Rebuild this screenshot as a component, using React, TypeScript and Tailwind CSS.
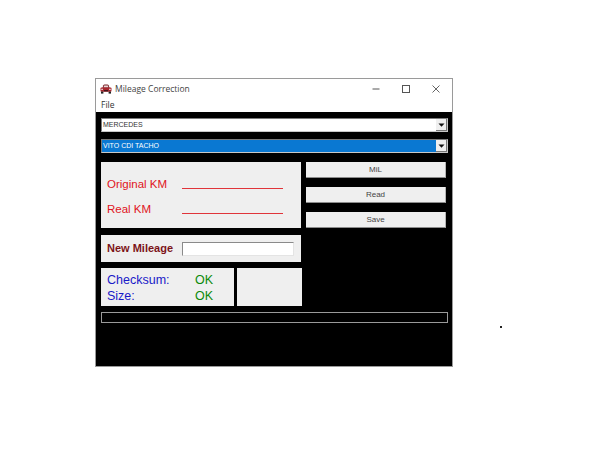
const sans = "font-['Liberation_Sans',Arial,sans-serif]";

function Combo({ text, selected }: { text: string; selected?: boolean }) {
  return (
    <div className="flex h-[14px] w-[347px] border border-t-[#7a7a7a] border-l-[#7a7a7a] border-r-[#c8c8c8] border-b-[#c8c8c8] bg-white">
      <div className={`flex flex-1 items-center pl-[1px] text-[7px] ${selected ? "bg-[#0a78d2] text-white" : "bg-white text-[#333]"}`}>{text}</div>
      <div className="flex w-[11px] items-center justify-center border-b border-r border-b-[#777] border-r-[#777] bg-[#efefef]">
        <svg width="7" height="4" viewBox="0 0 7 4"><path d="M0.5 0.5h6L3.5 3.8z" fill="#111" /></svg>
      </div>
    </div>
  );
}

function Btn({ text }: { text: string }) {
  return (
    <div className="flex h-[16px] w-[140px] items-center justify-center border-b border-r border-b-[#8c8c8c] border-r-[#b5b5b5] bg-[#efefef] pt-[1px] text-[8px] text-[#444]">{text}</div>
  );
}

export default function App() {
  return (
    <div className={`relative h-[450px] w-[600px] overflow-hidden bg-white pl-[95px] pt-[78px] ${sans}`}>
      <div className="flex h-[289px] w-[358px] flex-col border border-[#9a9a9a] bg-black">
        <div className="h-[33px] bg-white">
          <div className="flex h-[20px] items-center">
            <svg className="ml-[4px]" width="12" height="10" viewBox="0 0 12 10">
              <path d="M2.4 4 3.4 1.2C3.6.7 4 .5 4.5.5h3c.5 0 .9.2 1.1.7L9.6 4z" fill="#7a2026" />
              <path d="M3.5 3.6 4.2 1.5h3.6l.7 2.1z" fill="#e8d8d8" />
              <rect x="0.5" y="3.6" width="11" height="4.2" rx="1" fill="#a8262e" />
              <rect x="1" y="7.6" width="2.4" height="2" fill="#222" />
              <rect x="8.6" y="7.6" width="2.4" height="2" fill="#222" />
              <rect x="1.2" y="4.8" width="1.8" height="1" fill="#eee" />
              <rect x="9" y="4.8" width="1.8" height="1" fill="#eee" />
              <rect x="4" y="6" width="4" height="1.4" fill="#41141a" />
            </svg>
            <span className="ml-[3px] font-['Open_Sans',sans-serif] text-[8.5px] text-[#444]">Mileage Correction</span>
            <div className="ml-auto flex items-center">
              <svg className="mr-[22px]" width="8" height="8" viewBox="0 0 8 8"><path d="M0.5 4h7" stroke="#555" strokeWidth="1" /></svg>
              <svg className="mr-[22px]" width="8" height="8" viewBox="0 0 8 8"><rect x="0.5" y="0.5" width="7" height="7" fill="none" stroke="#555" strokeWidth="1" /></svg>
              <svg className="mr-[12px]" width="8" height="8" viewBox="0 0 8 8"><path d="M0.5 0.5l7 7M7.5 0.5l-7 7" stroke="#555" strokeWidth="0.9" /></svg>
            </div>
          </div>
          <div className="pl-[5px] pt-[1px] font-['Open_Sans',sans-serif] text-[8.5px] leading-[10px] text-[#333]">File</div>
        </div>

        <div className="flex flex-col pl-[5px] pt-[6px]">
          <Combo text="MERCEDES" />
          <div className="mt-[7px]"><Combo text="VITO CDI TACHO" selected /></div>

          <div className="mt-[9px] flex gap-[5px]">
            <div className="flex w-[200px] flex-col gap-[7px]">
              <div className="flex h-[66px] w-[200px] flex-col justify-center gap-[11px] bg-[#efefef] pl-[6px] text-[11.5px] text-[#e0141c]">
                <div className="flex h-[14px] items-center">
                  <span className="mt-[4px] w-[75px]">Original KM</span>
                  <span className="mt-[12px] h-px w-[101px] bg-[#e0343a]" />
                </div>
                <div className="flex h-[14px] items-center">
                  <span className="mt-[4px] w-[75px]">Real KM</span>
                  <span className="mt-[12px] h-px w-[101px] bg-[#e0343a]" />
                </div>
              </div>
              <div className="flex h-[27px] w-[200px] items-center bg-[#efefef] pl-[6px]">
                <span className="mb-[1px] w-[75px] text-[11px] font-bold text-[#7c1418]">New Mileage</span>
                <div className="h-[14px] w-[112px] border border-b-[#e4e4e4] border-l-[#8a8a8a] border-r-[#e4e4e4] border-t-[#8a8a8a] bg-white" />
              </div>
              <div className="-mt-[1px] flex w-[201px] gap-[3px]">
                <div className="flex h-[38px] w-[133px] flex-col justify-center bg-[#efefef] pl-[6px] pt-[1px] text-[12.5px] leading-[16px]">
                  <div className="flex">
                    <span className="w-[88px] text-[#1a1ac8]">Checksum:</span>
                    <span className="text-[#0a8a0a]">OK</span>
                  </div>
                  <div className="flex">
                    <span className="w-[88px] text-[#1a1ac8]">Size:</span>
                    <span className="text-[#0a8a0a]">OK</span>
                  </div>
                </div>
                <div className="h-[38px] w-[65px] bg-[#efefef]" />
              </div>
            </div>
            <div className="flex flex-col gap-[9px]">
              <Btn text="MiL" />
              <Btn text="Read" />
              <Btn text="Save" />
            </div>
          </div>

          <div className="mt-[6px] h-[11px] w-[347px] border border-[#9a9a9a] bg-black" />
        </div>
      </div>
      <div className="absolute left-[500px] top-[326px] h-[2px] w-[2px] bg-[#222]" />
    </div>
  );
}
